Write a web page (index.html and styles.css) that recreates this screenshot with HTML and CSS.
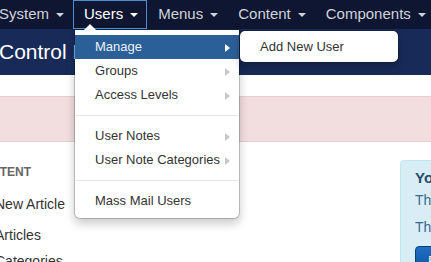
FILE: index.html
```html
<!DOCTYPE html>
<html>
<head>
<meta charset="utf-8">
<link rel="stylesheet" href="styles.css">
</head>
<body>
<nav class="navbar">
  <div class="nav-item"><span>System</span><b class="caret"></b></div>
  <div class="nav-item active"><span>Users</span><b class="caret"></b>
    <div class="dropdown">
      <div class="dd-item hl"><span>Manage</span><b class="arrow"></b>
        <div class="submenu"><div class="sub-item">Add New User</div></div>
      </div>
      <div class="dd-item"><span>Groups</span><b class="arrow"></b></div>
      <div class="dd-item"><span>Access Levels</span><b class="arrow"></b></div>
      <div class="divider"></div>
      <div class="dd-item"><span>User Notes</span><b class="arrow"></b></div>
      <div class="dd-item"><span>User Note Categories</span><b class="arrow"></b></div>
      <div class="divider"></div>
      <div class="dd-item"><span>Mass Mail Users</span></div>
    </div>
  </div>
  <div class="nav-item"><span>Menus</span><b class="caret"></b></div>
  <div class="nav-item"><span>Content</span><b class="caret"></b></div>
  <div class="nav-item"><span>Components</span><b class="caret"></b></div>
</nav>
<header class="header"><h1 class="title">Control Panel</h1></header>
<div class="alert"></div>
<div class="row">
  <aside class="sidebar">
    <div class="nav-header">Content</div>
    <div class="side-link first">New Article</div>
    <div class="side-link second">Articles</div>
    <div class="side-link">Categories</div>
  </aside>
  <main class="main">
    <div class="info">
      <div class="info-title">You have post-installation messages</div>
      <p class="info-text">There are important post-installation messages that require your attention.</p>
      <p class="info-text">This information area won't appear when you have hidden all the messages.</p>
      <div class="btn">Read Messages</div>
    </div>
  </main>
</div>
</body>
</html>
```
FILE: styles.css
```css
html, body {
  margin: 0;
  padding: 0;
  width: 431px;
  height: 262px;
  overflow: hidden;
  background: #fff;
  font-family: "Liberation Sans", Arial, Helvetica, sans-serif;
  color: #333;
}

.navbar {
  display: flex;
  height: 29px;
  background: #0e1632;
  margin-left: -12px;
  width: 460px;
  position: relative;
  z-index: 5;
}

.nav-item {
  position: relative;
  display: flex;
  align-items: flex-start;
  flex: none;
  border: 1px solid transparent;
  padding: 2px 8px 4px 10px;
  font-size: 15px;
  line-height: 21px;
  color: #cfd3db;
  white-space: nowrap;
}

.nav-item.active {
  border-color: #4f8fd0;
  color: #fff;
}

.caret {
  display: block;
  width: 0;
  height: 0;
  margin: 10px 0 0 7px;
  border-top: 4px solid currentColor;
  border-left: 4px solid transparent;
  border-right: 4px solid transparent;
}

.dropdown {
  position: absolute;
  left: 0;
  top: calc(100% + 1px);
  width: 164px;
  padding: 5px 0;
  background: #fff;
  border: 1px solid rgba(0, 0, 0, 0.2);
  border-radius: 0 0 6px 6px;
  background-clip: padding-box;
  box-shadow: 0 5px 10px rgba(0, 0, 0, 0.2);
  font-size: 13px;
  color: #333;
}

.dropdown::before {
  content: "";
  position: absolute;
  left: 9px;
  top: -6px;
  border-bottom: 6px solid #fff;
  border-left: 6px solid transparent;
  border-right: 6px solid transparent;
}

.dd-item {
  position: relative;
  display: flex;
  align-items: center;
  justify-content: space-between;
  height: 24px;
  line-height: 24px;
  padding: 0 9px 0 20px;
}

.dd-item.hl {
  background: #2b5f98;
  color: #eaf0f7;
}

.arrow {
  display: block;
  width: 0;
  height: 0;
  margin-top: 2px;
  border-left: 5px solid #c8c8c8;
  border-top: 4px solid transparent;
  border-bottom: 4px solid transparent;
}

.dd-item.hl .arrow {
  border-left-color: #fff;
}

.divider {
  height: 1px;
  margin: 8px 1px;
  background: #e5e5e5;
}

.submenu {
  position: absolute;
  left: 100%;
  top: -5px;
  width: 158px;
  padding: 4px 0 3px;
  background: #fff;
  border: 1px solid rgba(0, 0, 0, 0.2);
  border-radius: 6px;
  background-clip: padding-box;
  box-shadow: 0 5px 10px rgba(0, 0, 0, 0.2);
  color: #333;
}

.sub-item {
  line-height: 24px;
  padding: 0 20px;
}

.header {
  background: #182b58;
  padding: 11px 0;
}

.title {
  margin: 0 0 0 -1px;
  font-size: 21px;
  font-weight: normal;
  line-height: 24px;
  color: #fff;
  white-space: nowrap;
}

.alert {
  margin-top: 21px;
  height: 44px;
  background: #f2dede;
  border-top: 1px solid #ebccd1;
  border-bottom: 1px solid #ebccd1;
}

.row {
  display: flex;
}

.sidebar {
  flex: none;
  width: 227px;
  margin-left: -27px;
  padding-top: 21px;
}

.nav-header {
  font-size: 12px;
  font-weight: bold;
  line-height: 18px;
  text-transform: uppercase;
  color: #666;
}

.side-link {
  font-size: 14px;
  line-height: 22px;
  margin-left: 22px;
  color: #333;
}

.side-link.first {
  margin-top: 12px;
  margin-bottom: 9px;
}

.side-link.second {
  margin-bottom: 4px;
}

.main {
  flex: none;
  padding-left: 200px;
}

.info {
  width: 260px;
  margin-top: 18px;
  padding: 8px 14px;
  background: #d9edf7;
  border: 1px solid #bce8f1;
  border-radius: 4px;
  white-space: nowrap;
}

.info-title {
  font-size: 15px;
  font-weight: bold;
  line-height: 18px;
  color: #264d6e;
  margin-bottom: 3px;
}

.info-text {
  margin: 0 0 7px;
  font-size: 14px;
  line-height: 20px;
  color: #3a6a90;
}

.btn {
  display: inline-block;
  margin-top: 2px;
  padding: 4px 12px;
  font-size: 14px;
  line-height: 20px;
  color: #fff;
  background: linear-gradient(#1f6fc4, #0f4e98);
  border: 1px solid #0b3c78;
  border-radius: 4px;
}
```
